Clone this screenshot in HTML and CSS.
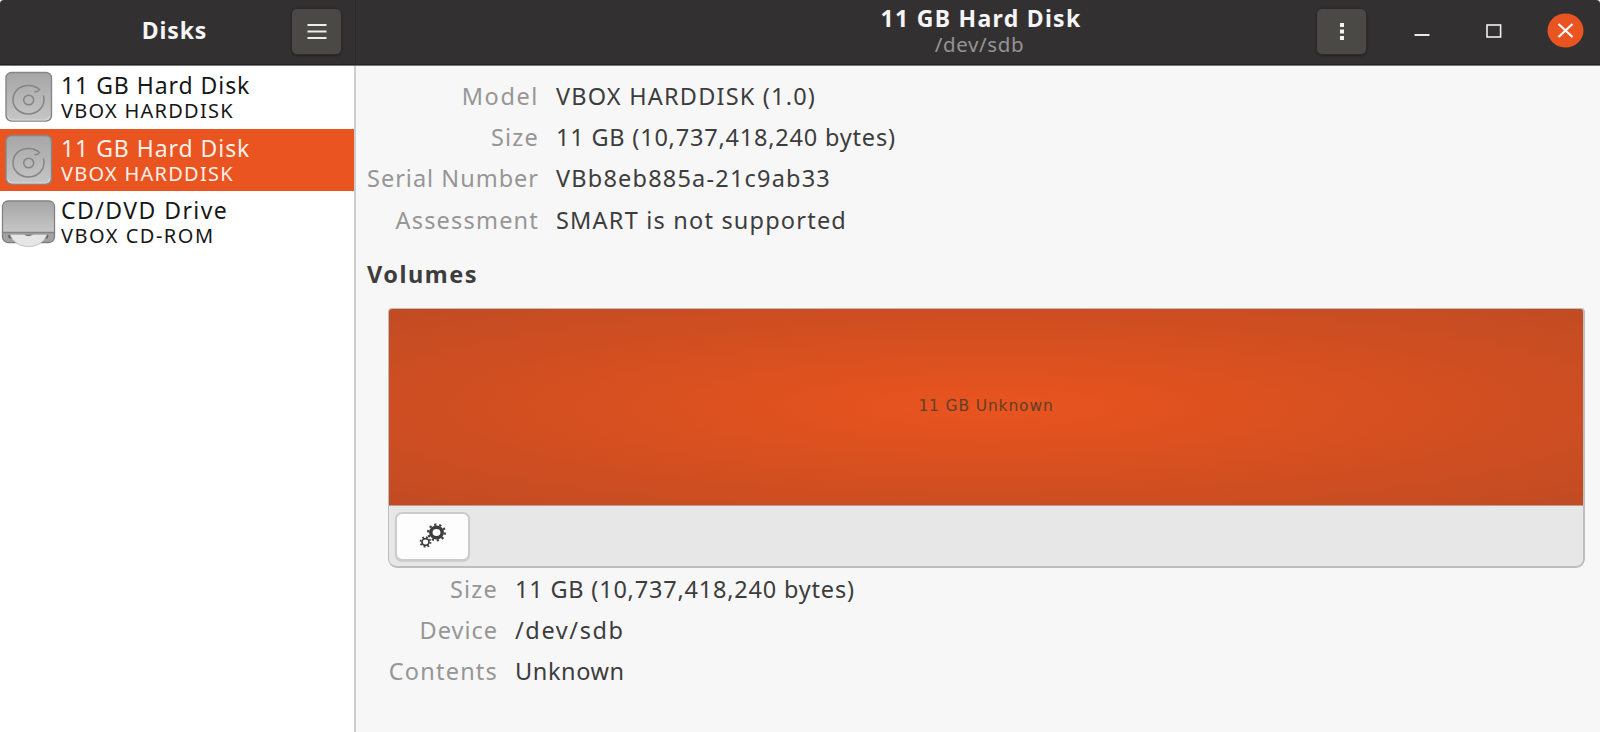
FILE: index.html
```
<!DOCTYPE html>
<html lang="en">
<head>
<meta charset="utf-8">
<title>Disks</title>
<link rel="stylesheet" href="styles.css">
</head>
<body>
<svg class="defs" width="0" height="0" aria-hidden="true">
  <defs>
    <linearGradient id="metal" x1="0" y1="0" x2="0" y2="1"><stop offset="0" stop-color="#a6a6a6"/><stop offset="1" stop-color="#c6c6c6"/></linearGradient>
    <symbol id="hdd" viewBox="0 0 56 60">
      <rect x="6" y="6.500" width="45.500" height="48.500" rx="5.500" fill="url(#metal)" stroke="#868686" stroke-width="1.400"/>
      <path d="M8 50q0 4 4 4h33.500q4 0 4-4" fill="none" stroke="#dadada" stroke-width="1"/>
      <path d="M43.500 29.500C46 39 39 48 28.700 48C19 48 13 41 13 34C13 25 20 19.500 28.500 19.500Q35 19.500 39.500 23.500Q38 26.200 34.500 25.800" fill="none" stroke="#858585" stroke-width="1.500"/>
      <ellipse cx="28.700" cy="34" rx="5" ry="4.800" fill="none" stroke="#858585" stroke-width="1.500"/>
    </symbol>
  </defs>
</svg>
<div class="window">
  <header class="header">
    <div class="header-left">
      <h1 class="title app-title">Disks</h1>
      <button class="header-button" aria-label="Menu"><svg width="20" height="18" viewBox="0 0 20 18"><path d="M.5 2h19M.5 8.500h19M.5 15h19" stroke="#ededed" stroke-width="1.800"/></svg></button>
    </div>
    <div class="header-right">
      <div class="heading"><h2 class="title drive-title">11 GB Hard Disk</h2><div class="subtitle">/dev/sdb</div></div>
      <div class="controls">
        <button class="header-button" aria-label="Drive options"><svg width="6" height="18" viewBox="0 0 6 18"><path d="M1 0h4v4H1zM1 6.500h4v4H1zM1 13h4v4H1z" fill="#f2f2f2"/></svg></button>
        <svg class="minimize" width="16" height="18" viewBox="0 0 16 18"><path d="M.5 13h15" stroke="#e8e8e8" stroke-width="2"/></svg>
        <svg class="maximize" width="16" height="16" viewBox="0 0 16 16"><rect x="1" y="2" width="13.600" height="12" fill="none" stroke="#f0f0f0" stroke-width="1.600"/></svg>
        <svg class="close" width="37" height="35" viewBox="0 0 37 35"><ellipse cx="18.500" cy="17.500" rx="18" ry="17" fill="#e95420"/><path d="M11.500 11l14 13M25.500 11l-14 13" stroke="#fff" stroke-width="2.200"/></svg>
      </div>
    </div>
  </header>
  <div class="body">
    <nav class="sidebar">
      <div class="drive"><svg class="drive-icon" width="56" height="60"><use href="#hdd"/></svg><div class="drive-text"><div class="name">11 GB Hard Disk</div><div class="vendor">VBOX HARDDISK</div></div></div>
      <div class="drive selected"><svg class="drive-icon" width="56" height="60"><use href="#hdd"/></svg><div class="drive-text"><div class="name">11 GB Hard Disk</div><div class="vendor">VBOX HARDDISK</div></div></div>
      <div class="drive"><svg class="drive-icon" width="56" height="60" viewBox="0 0 56 60">
        <rect x="2.500" y="10" width="52" height="41.500" rx="5.500" fill="#a2a2a2" stroke="#7f7f7f" stroke-width="1.300"/>
        <path d="M3.200 16q0-5.300 5-5.300h40.600q5 0 5 5.300v25H3.200z" fill="url(#metal)"/>
        <path d="M3 41.500h51" stroke="#858585" stroke-width="1.500"/>
        <path d="M8 45q0-1.500 2-1.500h36.500q2 0 2 1.500l-1 2.500H9z" fill="#666"/>
        <path d="M10 43.500h37C44 51.500 37 55.500 28.500 55.500S13 51.500 10 43.500z" fill="#e6e6e6" stroke="#b5b5b5" stroke-width=".8"/>
        <path d="M24 43.500h9q-2 1.700-4.500 1.700t-4.500-1.700z" fill="#777"/></svg><div class="drive-text"><div class="name cd">CD/DVD Drive</div><div class="vendor rom">VBOX CD-ROM</div></div></div>
    </nav>
    <main class="main">
      <dl class="info drive-info">
        <dt class="wider">Model</dt><dd class="wide">VBOX HARDDISK (1.0)</dd>
        <dt class="wide">Size</dt><dd>11 GB (10,737,418,240 bytes)</dd>
        <dt>Serial Number</dt><dd class="wide">VBb8eb885a-21c9ab33</dd>
        <dt class="wide">Assessment</dt><dd class="wide">SMART is not supported</dd>
      </dl>
      <h3 class="volumes-title">Volumes</h3>
      <section class="volume-box">
        <div class="volume"><span>11 GB Unknown</span></div>
        <div class="toolbar"><button class="tool" aria-label="Volume options"><svg width="30" height="28" viewBox="0 0 30 28">
          <g fill="none" stroke="#3d3d3d"><ellipse cx="18.500" cy="10.500" rx="5.700" ry="5.200" stroke-width="3.500"/><ellipse cx="18.500" cy="10.500" rx="8.400" ry="7.900" stroke-width="2.200" stroke-dasharray="2.200 2.920"/>
          <ellipse cx="7.500" cy="20" rx="3.500" ry="3.300" stroke-width="1.700"/><ellipse cx="7.500" cy="20" rx="5" ry="4.800" stroke-width="1.800" stroke-dasharray="1.700 2.150"/></g></svg></button></div>
      </section>
      <dl class="info volume-info">
        <dt class="wide">Size</dt><dd>11 GB (10,737,418,240 bytes)</dd>
        <dt>Device</dt><dd class="wider">/dev/sdb</dd>
        <dt class="wide">Contents</dt><dd class="unknown">Unknown</dd>
      </dl>
    </main>
  </div>
</div>
</body>
</html>
```
FILE: styles.css
```
* { box-sizing: border-box; }
body { margin: 0; font-family: "Noto Sans", sans-serif; background: #f7f7f7; color: #3d3d3d; overflow: hidden; }
h1, h2, h3, dl, dd { margin: 0; }
button { padding: 0; display: flex; align-items: center; justify-content: center; }
.defs { position: absolute; }
.window { width: 1600px; height: 732px; display: flex; flex-direction: column; }
.header { height: 66px; flex: none; display: flex; background: #333031; border-bottom: 1px solid #7b7879; box-shadow: inset 0 -1px #252324; color: #f5f5f5; border-radius: 4px 4px 0 0; }
.header-left { width: 356px; display: flex; align-items: flex-start; padding: 8px 13px 0 0; border-right: 1px solid #292727; }
.title { font-size: 23px; line-height: 28px; font-weight: 700; white-space: nowrap; }
.app-title { width: 292px; padding: 8px 0 0 58px; text-align: center; letter-spacing: .9px; }
.drive-title { letter-spacing: 1.3px; margin-top: -1px; }
.header-button { width: 51px; height: 47px; flex: none; border: 1px solid #2b2929; border-radius: 6px; background: #4a4946; box-shadow: 0 1px 2px #252323; }
.header-right { flex: 1; display: flex; }
.heading { width: 960px; padding: 5px 0 0 290px; text-align: center; }
.subtitle { font-size: 20.500px; line-height: 24px; color: #959393; letter-spacing: .65px; padding-right: 3px; }
.controls { display: flex; align-items: flex-start; padding-top: 8px; flex: none; }
.minimize { margin: 14px 0 0 47px; }
.maximize { margin: 15px 0 0 56px; }
.close { margin: 5px 0 0 45px; }
.body { flex: 1; display: flex; min-height: 0; }
.sidebar { width: 356px; background: #fff; border-right: 2px solid #cdcdcd; color: #171717; }
.drive { height: 62.600px; display: flex; }
.selected { background: #e95420; color: #fff0ea; }
.drive-icon { flex: none; }
.drive-text { padding: 4px 0 0 5px; white-space: nowrap; }
.name { font-size: 23px; line-height: 30px; letter-spacing: .95px; }
.vendor { font-size: 20px; line-height: 22px; letter-spacing: 1.250px; }
.cd { letter-spacing: 1.450px; }
.rom { letter-spacing: 1.500px; }
.main { flex: 1; padding: 10px 15px 0 11px; }
.info { display: grid; column-gap: 18px; grid-auto-rows: 41.200px; font-size: 23.500px; line-height: 41px; white-space: nowrap; letter-spacing: .8px; }
.info dt { text-align: right; color: #969696; margin-right: -1px; letter-spacing: 1px; }
.info .wide { letter-spacing: 1.200px; }
.info .wider { letter-spacing: 1.600px; }
.info .unknown { letter-spacing: .6px; }
.drive-info { grid-template-columns: 171px 1fr; }
.volumes-title { font-size: 23.500px; line-height: 32px; padding-top: 17px; height: 67px; letter-spacing: 1.500px; }
.volume-box { margin-left: 21px; height: 260px; border: 1px solid #bdbdbd; border-right-width: 2px; border-bottom-width: 2px; border-radius: 4px 4px 9px 9px; background: #e7e7e7; overflow: hidden; }
.volume { height: 197px; display: flex; align-items: center; justify-content: center; border-bottom: 1px solid #bd9c90; background: radial-gradient(ellipse farthest-corner, #e95420 0%, #e0521f 22%, #c14b23 100%); color: #604027; font: 15.500px "DejaVu Sans", sans-serif; letter-spacing: .85px; }
.volume span { margin-top: -2px; }
.toolbar { padding: 6px; }
.tool { width: 75px; height: 49px; background: #fdfdfd; border: 2px solid #cbcbcb; border-radius: 7px; box-shadow: 0 1px 1px #ccc; }
.volume-info { grid-template-columns: 130px 1fr; padding-top: 1px; }
```
